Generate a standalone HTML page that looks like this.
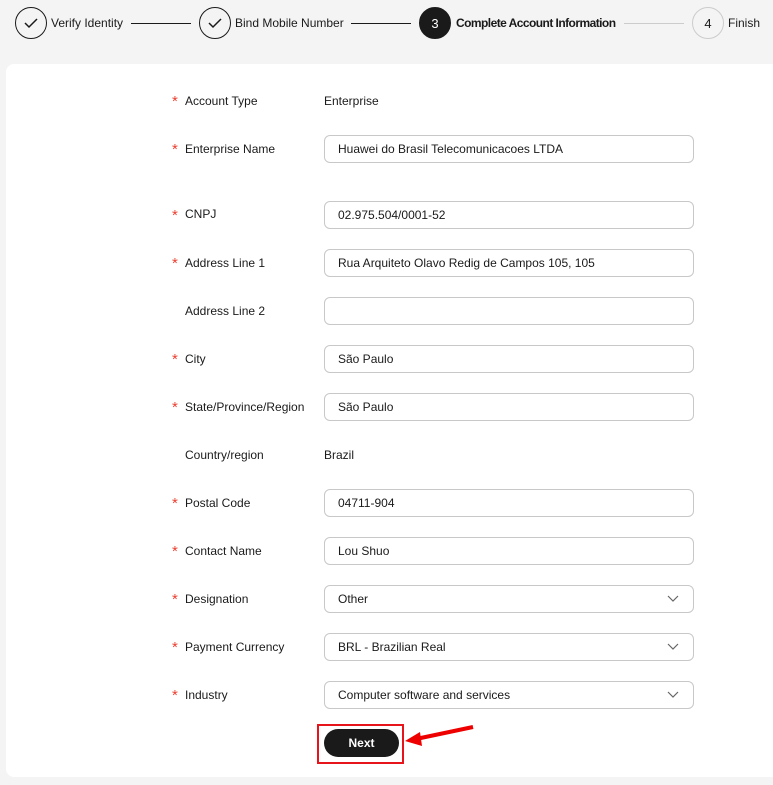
<!DOCTYPE html>
<html><head><meta charset="utf-8"><style>
*{box-sizing:border-box;margin:0;padding:0}
body{width:773px;height:785px;background:#f4f4f4;font-family:"Liberation Sans",Arial,sans-serif;font-size:12px;color:#1a1a1a;position:relative;overflow:hidden}
.a{position:absolute}
.circ{position:absolute;width:32px;height:32px;border-radius:50%;border:1px solid #1a1a1a;top:7px;display:flex;align-items:center;justify-content:center;font-size:13px}
.st{position:absolute;top:16px;font-size:12px;line-height:14px}
.ln{position:absolute;top:23px;height:1px;background:#1a1a1a}
.card{position:absolute;left:6px;top:64px;width:780px;height:713px;background:#fff;border-radius:8px}
.lbl{position:absolute;left:185px;line-height:14px}
.star{position:absolute;left:172px;color:#e8402f;font-size:15px;line-height:14px;top:2px}
.inp{position:absolute;left:324px;width:370px;height:28px;border:1px solid #c8c8c8;border-radius:6px;padding-left:13px;line-height:26px}
.val{position:absolute;left:324px;line-height:14px}
.chev{position:absolute;right:14px;top:9px}
</style></head><body>
<div class="circ" style="left:15px"><svg width="16" height="12" viewBox="0 0 16 12"><path d="M2 6 L6 10 L14 2" fill="none" stroke="#1a1a1a" stroke-width="1.5"/></svg></div>
<div class="st" style="left:51px">Verify Identity</div>
<div class="ln" style="left:131px;width:60px"></div>
<div class="circ" style="left:199px"><svg width="16" height="12" viewBox="0 0 16 12"><path d="M2 6 L6 10 L14 2" fill="none" stroke="#1a1a1a" stroke-width="1.5"/></svg></div>
<div class="st" style="left:235px">Bind Mobile Number</div>
<div class="ln" style="left:351px;width:60px"></div>
<div class="circ" style="left:419px;background:#1a1a1a;color:#fff">3</div>
<div class="st" style="left:456px;font-weight:bold;letter-spacing:-0.55px">Complete Account Information</div>
<div class="ln" style="left:624px;width:60px;background:#ccc"></div>
<div class="circ" style="left:692px;border-color:#ccc">4</div>
<div class="st" style="left:728px">Finish</div>

<div class="card"></div>

<span class="star" style="top:95px">*</span><span class="lbl" style="top:94px">Account Type</span><span class="val" style="top:94px">Enterprise</span>
<span class="star" style="top:143px">*</span><span class="lbl" style="top:142px">Enterprise Name</span><div class="inp" style="top:135px">Huawei do Brasil Telecomunicacoes LTDA</div>
<span class="star" style="top:209px">*</span><span class="lbl" style="top:207px">CNPJ</span><div class="inp" style="top:201px">02.975.504/0001-52</div>
<span class="star" style="top:257px">*</span><span class="lbl" style="top:256px">Address Line 1</span><div class="inp" style="top:249px">Rua Arquiteto Olavo Redig de Campos 105, 105</div>
<span class="lbl" style="top:304px">Address Line 2</span><div class="inp" style="top:297px"></div>
<span class="star" style="top:353px">*</span><span class="lbl" style="top:352px">City</span><div class="inp" style="top:345px">São Paulo</div>
<span class="star" style="top:401px">*</span><span class="lbl" style="top:400px">State/Province/Region</span><div class="inp" style="top:393px">São Paulo</div>
<span class="lbl" style="top:448px">Country/region</span><span class="val" style="top:448px">Brazil</span>
<span class="star" style="top:497px">*</span><span class="lbl" style="top:496px">Postal Code</span><div class="inp" style="top:489px">04711-904</div>
<span class="star" style="top:545px">*</span><span class="lbl" style="top:544px">Contact Name</span><div class="inp" style="top:537px">Lou Shuo</div>
<span class="star" style="top:593px">*</span><span class="lbl" style="top:592px">Designation</span><div class="inp" style="top:585px">Other<svg class="chev" width="12" height="8" viewBox="0 0 12 8"><path d="M1 1 L6 6 L11 1" fill="none" stroke="#666" stroke-width="1.2"/></svg></div>
<span class="star" style="top:641px">*</span><span class="lbl" style="top:640px">Payment Currency</span><div class="inp" style="top:633px">BRL - Brazilian Real<svg class="chev" width="12" height="8" viewBox="0 0 12 8"><path d="M1 1 L6 6 L11 1" fill="none" stroke="#666" stroke-width="1.2"/></svg></div>
<span class="star" style="top:689px">*</span><span class="lbl" style="top:688px">Industry</span><div class="inp" style="top:681px">Computer software and services<svg class="chev" width="12" height="8" viewBox="0 0 12 8"><path d="M1 1 L6 6 L11 1" fill="none" stroke="#666" stroke-width="1.2"/></svg></div>

<div class="a" style="left:324px;top:729px;width:75px;height:28px;border-radius:14px;background:#1a1a1a;color:#fff;font-weight:bold;text-align:center;line-height:28px">Next</div>
<div class="a" style="left:317px;top:724px;width:87px;height:40px;border:2px solid #e8141b"></div>
<svg class="a" style="left:400px;top:720px" width="80" height="30" viewBox="0 0 80 30"><path d="M73 7 L16 19" stroke="#ee0000" stroke-width="4" fill="none"/><path d="M5 21 L20 12 L22 26 Z" fill="#ee0000"/></svg>
</body></html>
